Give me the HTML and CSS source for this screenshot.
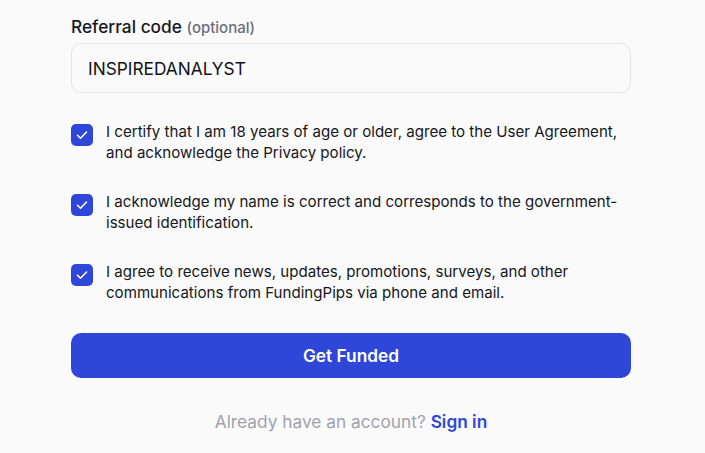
FILE: index.html
```html
<!DOCTYPE html>
<html>
<head>
<meta charset="utf-8">
<link rel="stylesheet" href="styles.css">
</head>
<body>
<div class="form">
  <div class="field">
    <label class="label">Referral code <span class="optional">(optional)</span></label>
    <div class="input">INSPIREDANALYST</div>
  </div>
  <div class="checks">
    <div class="check">
      <span class="box"><svg viewBox="0 0 22 22" width="22" height="22"><path d="M6.5 11.2l3 3 6-6.2" fill="none" stroke="#fff" stroke-width="1.6" stroke-linecap="round" stroke-linejoin="round"/></svg></span>
      <p class="check-text">I certify that I am 18 years of age or older, agree to the User Agreement, and acknowledge the Privacy policy.</p>
    </div>
    <div class="check">
      <span class="box"><svg viewBox="0 0 22 22" width="22" height="22"><path d="M6.5 11.2l3 3 6-6.2" fill="none" stroke="#fff" stroke-width="1.6" stroke-linecap="round" stroke-linejoin="round"/></svg></span>
      <p class="check-text">I acknowledge my name is correct and corresponds to the government-issued identification.</p>
    </div>
    <div class="check">
      <span class="box"><svg viewBox="0 0 22 22" width="22" height="22"><path d="M6.5 11.2l3 3 6-6.2" fill="none" stroke="#fff" stroke-width="1.6" stroke-linecap="round" stroke-linejoin="round"/></svg></span>
      <p class="check-text">I agree to receive news, updates, promotions, surveys, and other communications from FundingPips via phone and email.</p>
    </div>
  </div>
  <button class="submit">Get Funded</button>
  <p class="signin">Already have an account? <a class="signin-link">Sign in</a></p>
</div>
</body>
</html>
```
FILE: styles.css
```css
html, body {
  margin: 0;
  padding: 0;
  background: #fafafa;
  font-family: Inter, "Noto Sans", sans-serif;
  color: #111318;
}
.form {
  width: 560px;
  margin-left: 71px;
  padding-top: 15px;
  display: flex;
  flex-direction: column;
}
.field {
  display: flex;
  flex-direction: column;
  gap: 3px;
}
.label {
  font-size: 17.3px;
  font-weight: 500;
  line-height: 24px;
  color: #16181d;
}
.optional {
  font-size: 15px;
  color: #6b6f7a;
}
.input {
  height: 50px;
  box-sizing: border-box;
  border: 1px solid #e6e6e8;
  border-radius: 10px;
  background: #fafafa;
  display: flex;
  align-items: center;
  padding-left: 16px;
  font-size: 17.3px;
  color: #111318;
}
.checks {
  margin-top: 28px;
  display: flex;
  flex-direction: column;
  gap: 28px;
}
.check {
  display: flex;
  gap: 13px;
  align-items: flex-start;
}
.box {
  flex: none;
  width: 22px;
  height: 22px;
  margin-top: 3px;
  border-radius: 5px;
  background: #2e47d9;
  display: flex;
}
.check-text {
  margin: 0;
  font-size: 15.1px;
  line-height: 21px;
  color: #15171c;
}
.submit {
  margin-top: 30px;
  height: 45px;
  border: none;
  border-radius: 10px;
  background: #2e47d9;
  color: #fff;
  font-family: Inter, sans-serif;
  font-size: 17.3px;
  font-weight: 600;
}
.signin {
  margin: 32px 0 0;
  text-align: center;
  font-size: 17.3px;
  line-height: 24px;
  color: #9fa2ad;
}
.signin-link {
  color: #2e47d9;
  font-weight: 600;
}
```
